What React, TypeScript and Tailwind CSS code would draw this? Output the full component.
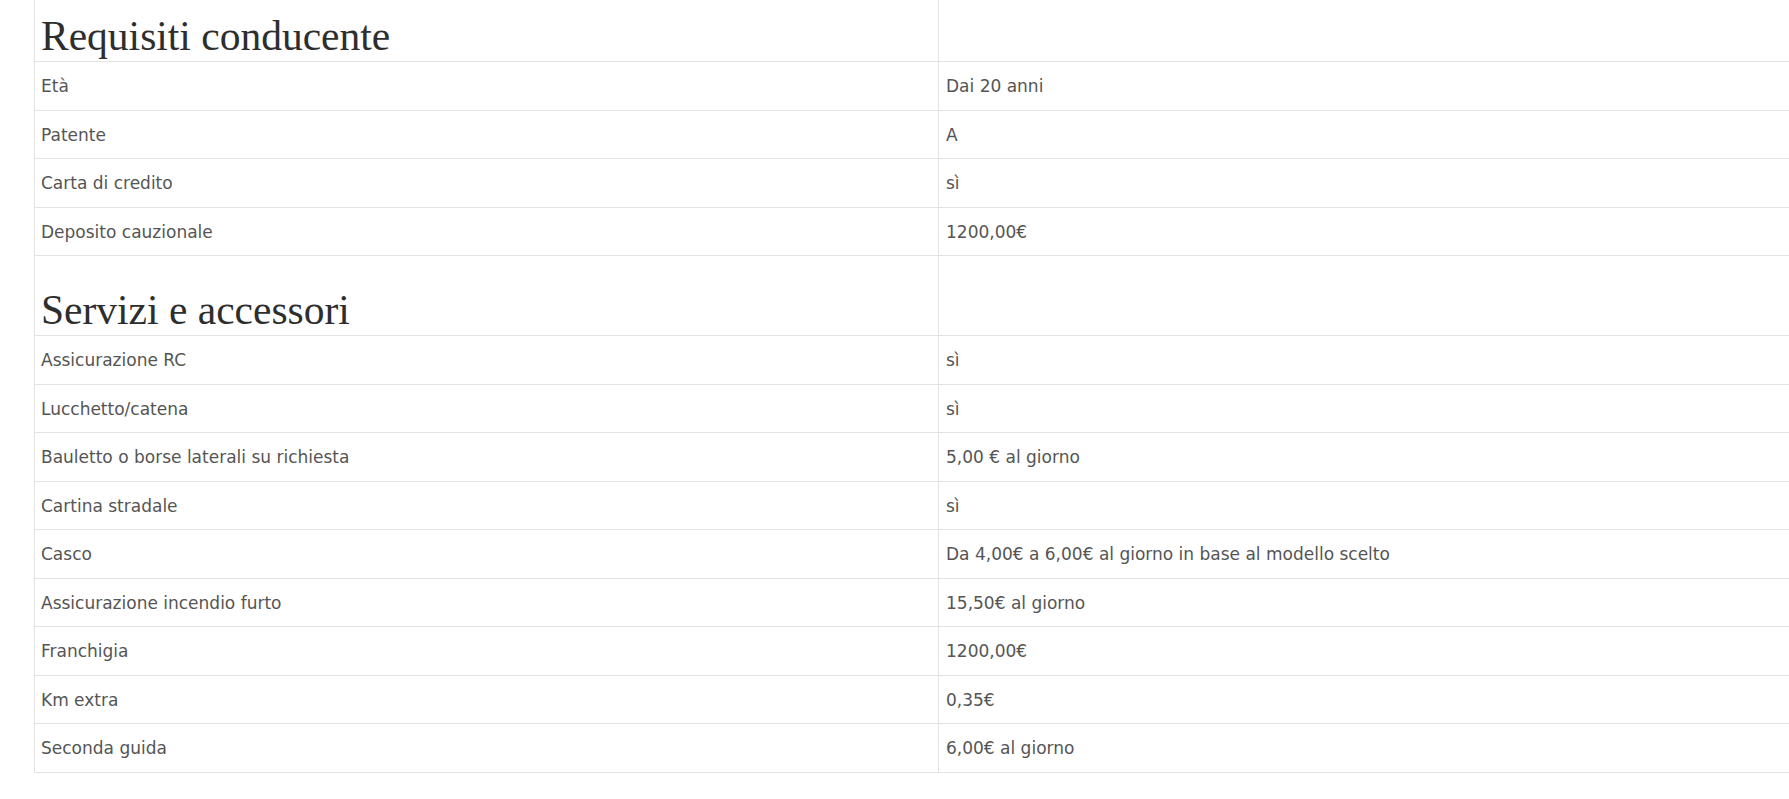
const requisiti = [
  ['Età', 'Dai 20 anni'],
  ['Patente', 'A'],
  ['Carta di credito', 'sì'],
  ['Deposito cauzionale', '1200,00€'],
];

const servizi = [
  ['Assicurazione RC', 'sì'],
  ['Lucchetto/catena', 'sì'],
  ['Bauletto o borse laterali su richiesta', '5,00 € al giorno'],
  ['Cartina stradale', 'sì'],
  ['Casco', 'Da 4,00€ a 6,00€ al giorno in base al modello scelto'],
  ['Assicurazione incendio furto', '15,50€ al giorno'],
  ['Franchigia', '1200,00€'],
  ['Km extra', '0,35€'],
  ['Seconda guida', '6,00€ al giorno'],
];

function HeadingRow({ title }: { title: string }) {
  return (
    <div className="grid grid-cols-[904px_1fr] h-[80px] border-b border-[#e3e3e3]">
      <div className="flex items-end border-r border-[#e3e3e3] px-[6px] pb-[4px]">
        <h2 className="text-[41.5px] leading-none text-[#2e2e2e] font-['Liberation_Serif',serif] font-normal">
          {title}
        </h2>
      </div>
      <div />
    </div>
  );
}

function Row({ label, value }: { label: string; value: string }) {
  return (
    <div className="grid grid-cols-[904px_1fr] border-b border-[#e3e3e3] text-[17px] leading-6 text-[#555]">
      <div className="border-r border-[#e3e3e3] px-[6px] pt-3 pb-[11.5px]">{label}</div>
      <div className="px-[7px] pt-3 pb-[11.5px]">{value}</div>
    </div>
  );
}

export default function App() {
  return (
    <div className="w-full h-[799px] overflow-hidden bg-white font-['DejaVu_Sans',sans-serif]">
      {/* page is scrolled a little: the first heading row is cut at the top */}
      <div className="-mt-[18px] ml-[34px] w-[1808px] border-l border-[#e3e3e3]">
        <HeadingRow title="Requisiti conducente" />
        {requisiti.map(([label, value]) => (
          <Row key={label} label={label} value={value} />
        ))}
        <HeadingRow title="Servizi e accessori" />
        {servizi.map(([label, value]) => (
          <Row key={label} label={label} value={value} />
        ))}
      </div>
    </div>
  );
}
